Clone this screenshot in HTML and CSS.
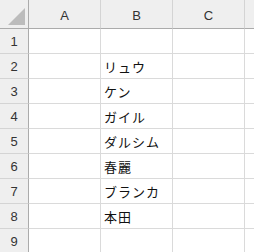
FILE: index.html
```html
<!DOCTYPE html>
<html lang="ja">
<head>
<meta charset="utf-8">
<link rel="stylesheet" href="styles.css">
</head>
<body>
<div class="sheet">
  <div class="corner"><span class="tri"></span></div>
  <div class="colhead">A</div>
  <div class="colhead">B</div>
  <div class="colhead">C</div>
  <div class="colhead last"></div>

  <div class="rowhead">1</div><div class="cell"></div><div class="cell"></div><div class="cell"></div><div class="cell last"></div>
  <div class="rowhead">2</div><div class="cell"></div><div class="cell">リュウ</div><div class="cell"></div><div class="cell last"></div>
  <div class="rowhead">3</div><div class="cell"></div><div class="cell">ケン</div><div class="cell"></div><div class="cell last"></div>
  <div class="rowhead">4</div><div class="cell"></div><div class="cell">ガイル</div><div class="cell"></div><div class="cell last"></div>
  <div class="rowhead">5</div><div class="cell"></div><div class="cell">ダルシム</div><div class="cell"></div><div class="cell last"></div>
  <div class="rowhead">6</div><div class="cell"></div><div class="cell">春麗</div><div class="cell"></div><div class="cell last"></div>
  <div class="rowhead">7</div><div class="cell"></div><div class="cell">ブランカ</div><div class="cell"></div><div class="cell last"></div>
  <div class="rowhead">8</div><div class="cell"></div><div class="cell">本田</div><div class="cell"></div><div class="cell last"></div>
  <div class="rowhead">9</div><div class="cell"></div><div class="cell"></div><div class="cell"></div><div class="cell last"></div>
</div>
</body>
</html>
```
FILE: styles.css
```css
html, body {
  margin: 0;
  padding: 0;
  background: #ffffff;
  overflow: hidden;
}
.sheet {
  display: grid;
  grid-template-columns: 29px 72px 72px 72px 1fr;
  grid-template-rows: 29px repeat(9, 25px);
  width: 254px;
  font-family: "Noto Sans CJK JP", "Noto Sans", sans-serif;
}
.corner {
  background: #efefef;
  border-right: 1px solid #ababab;
  border-bottom: 1px solid #ababab;
  box-sizing: border-box;
  position: relative;
}
.tri {
  position: absolute;
  right: 3px;
  bottom: 3px;
  width: 0;
  height: 0;
  border-left: 17px solid transparent;
  border-bottom: 17px solid #bcbcbc;
}
.colhead {
  background: #efefef;
  border-right: 1px solid #d4d4d4;
  border-bottom: 1px solid #ababab;
  box-sizing: border-box;
  display: flex;
  align-items: center;
  justify-content: center;
  font-family: "Liberation Sans", Arial, sans-serif;
  font-size: 13px;
  color: #333333;
  padding-top: 2px;
}
.colhead.last {
  border-right: none;
}
.rowhead {
  background: #efefef;
  border-right: 1px solid #ababab;
  border-bottom: 1px solid #d4d4d4;
  box-sizing: border-box;
  display: flex;
  align-items: center;
  justify-content: center;
  font-family: "Liberation Sans", Arial, sans-serif;
  font-size: 13px;
  color: #333333;
}
.cell {
  border-right: 1px solid #dadada;
  border-bottom: 1px solid #dadada;
  box-sizing: border-box;
  display: flex;
  align-items: center;
  padding-left: 3px;
  font-size: 13px;
  color: #111111;
  letter-spacing: 1px;
  white-space: nowrap;
}
.cell.last {
  border-right: none;
}
```
